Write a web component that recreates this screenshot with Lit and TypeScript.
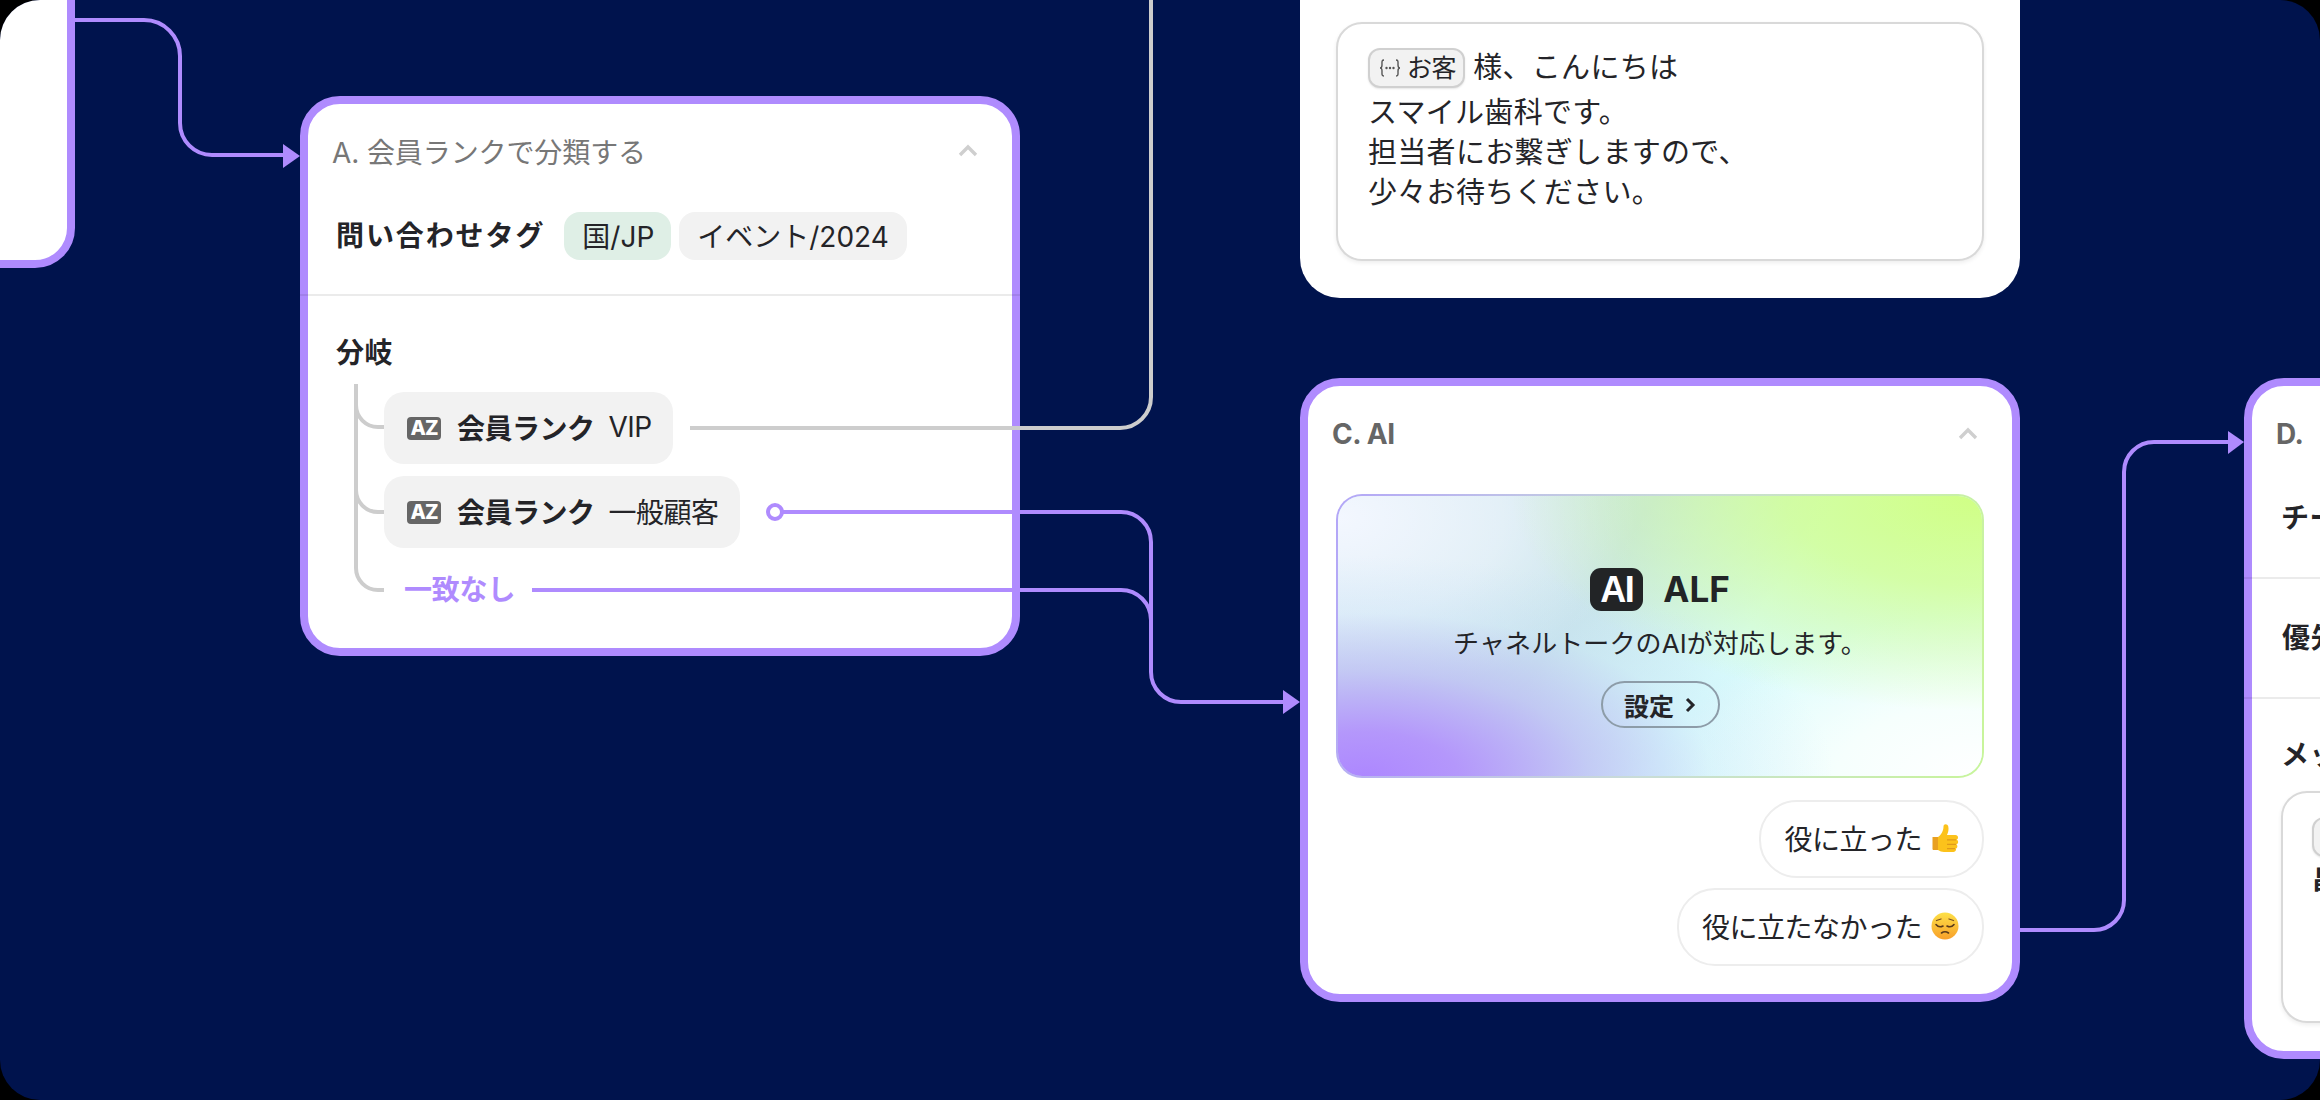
import { LitElement, html, css, svg } from "lit";
import { customElement } from "lit/decorators.js";

const chevron = html`<svg class="chev" width="22" height="14" viewBox="0 0 22 14"><path d="M3 11 L11 3 L19 11" fill="none" stroke="#cfcfcf" stroke-width="3.4"/></svg>`;

const braces = html`<svg class="braces" width="22" height="20" viewBox="0 0 22 20"><path d="M5 2 C2.5 2 3 4 3 7 C3 9 2.5 10 1 10 C2.5 10 3 11 3 13 C3 16 2.5 18 5 18 M17 2 C19.5 2 19 4 19 7 C19 9 19.5 10 21 10 C19.5 10 19 11 19 13 C19 16 19.5 18 17 18" fill="none" stroke="#555" stroke-width="1.4"/><circle cx="7.5" cy="10" r="1.2" fill="#555"/><circle cx="11" cy="10" r="1.2" fill="#555"/><circle cx="14.5" cy="10" r="1.2" fill="#555"/></svg>`;

const thumb = html`<svg class="emoji" width="28" height="30" viewBox="0 0 28 30"><path d="M1.5 14 H7 V27 H2.5 C2 27 1.5 26.5 1.5 26 Z" fill="#e9a020"/><path d="M7 14 C10 12 12.5 8 12.5 3.5 C12.5 0.5 16.5 0.2 17.3 3.5 C18 6.5 17 10 16 12 H24.5 C27.5 12 27.8 16 25.6 16.8 C27.8 17.4 27.6 21 25.4 21.4 C27 22.2 26.6 25.2 24.6 25.6 C25.6 26.6 24.8 29 22.5 29 H13 C10.5 29 9 28 7 27 Z" fill="#fcc21b"/><path d="M16 16.8 H25 M16 21.4 H25 M16 25.6 H24" stroke="#e09a1a" stroke-width="1.2" fill="none"/></svg>`;

const face = html`<svg class="emoji" width="28" height="28" viewBox="0 0 28 28"><defs><linearGradient id="fg" x1="0" y1="0" x2="0" y2="1"><stop offset="0" stop-color="#fde047"/><stop offset="1" stop-color="#f8a02a"/></linearGradient></defs><circle cx="14" cy="14" r="13.5" fill="url(#fg)"/><path d="M5 12.5 C7 15 10 15 12 14 M23 12.5 C21 15 18 15 16 14" fill="none" stroke="#5a3a1a" stroke-width="1.6" stroke-linecap="round"/><path d="M5.5 8.5 L10 7 M22.5 8.5 L18 7" fill="none" stroke="#7a4e20" stroke-width="1.3" stroke-linecap="round"/><path d="M10.5 21 C12.5 19.6 15.5 19.6 17.5 21" fill="none" stroke="#5a3a1a" stroke-width="1.6" stroke-linecap="round"/></svg>`;

const P = "#af8bfe";
const G = "#cdcdcd";

@customElement("app-root")
export class AppRoot extends LitElement {
  static styles = css`
    :host {
      display: block;
      width: 2320px;
      height: 1100px;
      background: #000;
      font-family: Inter, "Noto Sans CJK JP", sans-serif;
      color: #242428;
    }
    .canvas {
      position: relative;
      width: 2320px;
      height: 1100px;
      background: #00134d;
      border-radius: 40px;
      overflow: hidden;
    }
    .card {
      position: absolute;
      box-sizing: border-box;
      background: #fff;
      border-radius: 40px;
      display: flex;
      flex-direction: column;
    }
    .sel { border: 8px solid #af8bfe; }
    .c-left { left: -700px; top: -200px; width: 775px; height: 468px; }
    .c-a { left: 300px; top: 96px; width: 720px; height: 560px; }
    .c-b { left: 1300px; top: -200px; width: 720px; height: 498px; justify-content: flex-end; padding: 0 36px 37px; }
    .c-c { left: 1300px; top: 378px; width: 720px; height: 624px; }
    .c-d { left: 2244px; top: 378px; width: 720px; height: 681px; }
    .head {
      box-sizing: border-box;
      height: 96px;
      flex: none;
      display: flex;
      align-items: center;
      justify-content: space-between;
      padding: 0 33px 0 24px;
      font-size: 28px;
      letter-spacing: -0.1px;
      color: #777;
    }
    .head.a { padding-bottom: 3px; }
    .head.b { font-weight: 700; color: #666; letter-spacing: -0.4px; }
    .chev { display: block; }
    .tags {
      display: flex;
      align-items: center;
      padding: 12px 28px 34px;
    }
    .label { font-size: 28px; line-height: 40px; font-weight: 700; letter-spacing: 0.6px; }
    .label.wide { letter-spacing: 1.9px; }
    .tag {
      height: 48px;
      display: flex;
      align-items: center;
      padding: 0 18px;
      border-radius: 16px;
      background: #f2f2f2;
      font-size: 28px;
      margin-left: 8px;
      padding-bottom: 2px;
      box-sizing: border-box;
    }
    .tag.first { background: #dfefe6; margin-left: 19px; padding: 0 17px 2px 18px; }
    .div { height: 2px; flex: none; margin: 0 -8px; background: rgba(0, 0, 0, 0.08); }
    .branch { padding: 37px 28px 0; display: flex; flex-direction: column; }
    .rows { display: flex; flex-direction: column; gap: 12px; margin: 19px 0 0 48px; align-items: flex-start; }
    .row {
      height: 72px;
      box-sizing: border-box;
      display: flex;
      align-items: center;
      padding: 0 21px 2px 23px;
      background: #f2f2f2;
      border-radius: 20px;
      font-size: 28px;
      letter-spacing: -0.5px;
    }
    .az {
      width: 34px;
      height: 23px;
      border-radius: 4px;
      background: #666;
      color: #fff;
      font-size: 20px;
      line-height: 23px;
      font-weight: 800;
      text-align: center;
      letter-spacing: -1px;
      margin: 2px 16px 0 0;
    }
    .row b { font-weight: 700; margin-right: 14px; }
    .none {
      margin: 22px 0 0 68px;
      font-size: 28px;
      line-height: 40px;
      font-weight: 700;
      color: #af8bfe;
      letter-spacing: -0.2px;
    }
    .box {
      box-sizing: border-box;
      background: #fff;
      border: 2px solid #d9d9d9;
      border-radius: 26px;
      box-shadow: 0 2px 4px rgba(0, 0, 0, 0.07);
    }
    .box.msg { height: 239px; padding: 24px 30px; font-size: 29px; line-height: 40px; letter-spacing: 0.3px; }
    .first-line { display: flex; align-items: center; height: 40px; margin-bottom: 5px; }
    .var {
      box-sizing: border-box;
      height: 40px;
      display: flex;
      align-items: center;
      gap: 6px;
      padding: 0 7px 0 9px;
      border: 2px solid #d0d0d0;
      border-radius: 12px;
      background: #f2f2f2;
      font-size: 25px;
      letter-spacing: -0.4px;
      margin-right: 8px;
      box-shadow: 0 1px 2px rgba(0, 0, 0, 0.1);
    }
    .braces { display: block; }
    .body { padding: 12px 28px 0; display: flex; flex-direction: column; align-items: stretch; }
    .panel {
      box-sizing: border-box;
      height: 284px;
      border: 2px solid transparent;
      border-radius: 26px;
      padding-top: 72px;
      display: flex;
      flex-direction: column;
      align-items: center;
      background:
        radial-gradient(470px 220px at 4% 100%, #ad87ff 0%, #b497fb 20%, rgba(190, 190, 245, 0.75) 48%, rgba(200, 225, 250, 0.3) 74%, rgba(200, 225, 250, 0) 100%) padding-box,
        radial-gradient(470px 215px at 100% 0%, #d0ff85 0%, rgba(208, 255, 133, 0.72) 42%, rgba(208, 255, 133, 0) 100%) padding-box,
        radial-gradient(300px 180px at 0% 8%, #f3f7ff 0%, rgba(243, 247, 255, 0.6) 55%, rgba(243, 247, 255, 0) 100%) padding-box,
        radial-gradient(320px 160px at 100% 100%, #ffffff 0%, #f6fffd 45%, rgba(226, 255, 255, 0) 100%) padding-box,
        linear-gradient(125deg, #cfe6ee 0%, #c8e4ea 38%, #d8fbfb 60%, #e4ffff 100%) padding-box,
        linear-gradient(100deg, #b3a6f8 0%, #c9dcd8 50%, #c8f59a 100%) border-box;
    }
    .brand { display: flex; align-items: center; gap: 20px; height: 43px; }
    .ai {
      width: 53px;
      height: 43px;
      border-radius: 11px;
      background: #222426;
      color: #fff;
      display: flex;
      align-items: center;
      justify-content: center;
      font-size: 36px;
      font-weight: 700;
      letter-spacing: -1.5px;
      font-family: "Liberation Sans", Inter, sans-serif;
    }
    .alf { font-size: 35px; font-weight: 700; color: #222426; line-height: 43px; }
    .sub { margin-top: 14px; font-size: 26px; line-height: 38px; letter-spacing: 0.1px; color: #242428; }
    .btn {
      box-sizing: border-box;
      margin-top: 18px;
      width: 119px;
      height: 47px;
      border: 2px solid #8d9ca8;
      border-radius: 24px;
      display: flex;
      align-items: center;
      justify-content: center;
      gap: 10px;
      font-size: 25px;
      font-weight: 700;
      color: #242428;
    }
    .btn svg { display: block; }
    .answers { display: flex; flex-direction: column; align-items: flex-end; gap: 10px; margin-top: 22px; }
    .bubble {
      box-sizing: border-box;
      height: 78px;
      border: 2px solid #ededed;
      border-radius: 38px;
      padding: 0 23px 2px 23px;
      display: flex;
      align-items: center;
      gap: 9px;
      font-size: 28px;
      letter-spacing: -0.5px;
      background: #fff;
    }
    .emoji { display: block; }
    .d-first { height: 71px; padding: 0 29px 24px; display: flex; align-items: center; flex: none; }
    .d-sec { padding: 0 30px; height: 118px; display: flex; align-items: center; flex: none; }
    .d-msg { padding: 36px 28px 0 29px; }
    .box.d-box { height: 232px; margin-top: 16px; padding: 24px 29px; font-size: 28px; line-height: 26px; }
    .var.empty { width: 96px; }
    .d-line { font-weight: 700; font-size: 26px; line-height: 26px; margin-top: 10px; }
    .wires { position: absolute; inset: 0; width: 2320px; height: 1100px; pointer-events: none; }
  `;

  render() {
    return html`
      <div class="canvas">
        <div class="card sel c-left"></div>

        <div class="card sel c-a">
          <div class="head a"><span>A. 会員ランクで分類する</span>${chevron}</div>
          <div class="tags">
            <span class="label wide">問い合わせタグ</span>
            <span class="tag first">国/JP</span>
            <span class="tag">イベント/2024</span>
          </div>
          <div class="div"></div>
          <div class="branch">
            <span class="label">分岐</span>
            <div class="rows">
              <div class="row"><span class="az">AZ</span><b>会員ランク</b><span>VIP</span></div>
              <div class="row"><span class="az">AZ</span><b>会員ランク</b><span>一般顧客</span></div>
            </div>
            <div class="none">一致なし</div>
          </div>
        </div>

        <div class="card c-b">
          <div class="box msg">
            <div class="first-line"><span class="var">${braces}<span>お客</span></span><span>様、こんにちは</span></div>
            <div>スマイル歯科です。</div>
            <div>担当者にお繋ぎしますので、</div>
            <div>少々お待ちください。</div>
          </div>
        </div>

        <div class="card sel c-c">
          <div class="head b"><span>C. AI</span>${chevron}</div>
          <div class="body">
            <div class="panel">
              <div class="brand"><span class="ai">AI</span><span class="alf">ALF</span></div>
              <div class="sub">チャネルトークのAIが対応します。</div>
              <div class="btn"><span>設定</span><svg width="12" height="18" viewBox="0 0 12 18"><path d="M3 3 L9 9 L3 15" fill="none" stroke="#242428" stroke-width="3"/></svg></div>
            </div>
            <div class="answers">
              <div class="bubble"><span>役に立った</span>${thumb}</div>
              <div class="bubble"><span>役に立たなかった</span>${face}</div>
            </div>
          </div>
        </div>

        <div class="card sel c-d">
          <div class="head b"><span>D.</span></div>
          <div class="d-first"><span class="label">チーム</span></div>
          <div class="div"></div>
          <div class="d-sec"><span class="label">優先度</span></div>
          <div class="div"></div>
          <div class="d-msg">
            <span class="label">メッセージ</span>
            <div class="box d-box">
              <span class="var empty"></span>
              <div class="d-line">昌</div>
            </div>
          </div>
        </div>

        <svg class="wires" viewBox="0 0 2320 1100" fill="none">
          ${svg`
            <path d="M75 20 H144 A36 36 0 0 1 180 56 V123 A32 32 0 0 0 212 155 H286" stroke="${P}" stroke-width="4"/>
            <path d="M283 144 L300 156 L283 168 Z" fill="${P}"/>
            <path d="M356 384 V405 A22 22 0 0 0 378 427 H384 M356 405 V568 A22 22 0 0 0 378 590 H384 M356 490 A22 22 0 0 0 378 512 H384" stroke="${G}" stroke-width="4"/>
            <path d="M690 428 H1120 A31 31 0 0 0 1151 397 V0" stroke="${G}" stroke-width="4"/>
            <path d="M782 512 H1121 A30 30 0 0 1 1151 542 V672 A30 30 0 0 0 1181 702 H1286" stroke="${P}" stroke-width="4"/>
            <path d="M532 590 H1121 A30 30 0 0 1 1151 620" stroke="${P}" stroke-width="4"/>
            <circle cx="775" cy="512" r="7" fill="#fff" stroke="${P}" stroke-width="4"/>
            <path d="M1283 690 L1300 702 L1283 714 Z" fill="${P}"/>
            <path d="M2020 930 H2094 A30 30 0 0 0 2124 900 V472 A30 30 0 0 1 2154 442 H2230" stroke="${P}" stroke-width="4"/>
            <path d="M2228 431 L2244 442 L2228 454 Z" fill="${P}"/>
          `}
        </svg>
      </div>
    `;
  }
}
